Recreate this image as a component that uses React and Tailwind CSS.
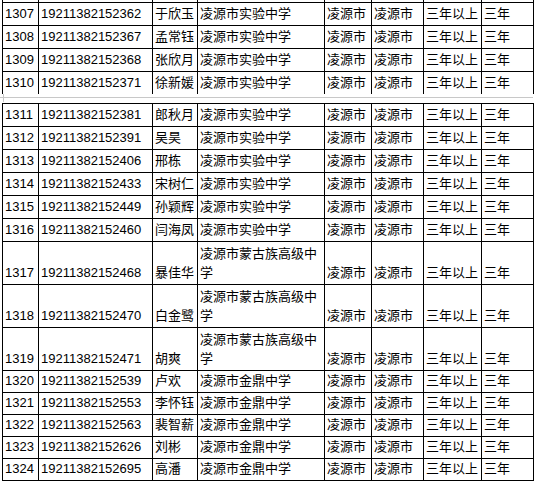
const SY = '凌源市实验中学'
const MG = '凌源市蒙古族高级中学'
const JD = '凌源市金鼎中学'

const first = [
  ['1307', '19211382152362', '于欣玉', SY],
  ['1308', '19211382152367', '孟常钰', SY],
  ['1309', '19211382152368', '张欣月', SY],
  ['1310', '19211382152371', '徐新媛', SY],
]

const second = [
  ['1311', '19211382152381', '郎秋月', SY],
  ['1312', '19211382152391', '吴昊', SY],
  ['1313', '19211382152406', '邢栋', SY],
  ['1314', '19211382152433', '宋树仁', SY],
  ['1315', '19211382152449', '孙颖辉', SY],
  ['1316', '19211382152460', '闫海凤', SY],
  ['1317', '19211382152468', '暴佳华', MG],
  ['1318', '19211382152470', '白金鹭', MG],
  ['1319', '19211382152471', '胡爽', MG],
  ['1320', '19211382152539', '卢欢', JD],
  ['1321', '19211382152553', '李怀钰', JD],
  ['1322', '19211382152563', '裴智薪', JD],
  ['1323', '19211382152626', '刘彬', JD],
  ['1324', '19211382152695', '高潘', JD],
]

const cell = 'border border-black px-[2px] pb-[2px] align-bottom whitespace-normal break-all'

function Cols() {
  return (
    <colgroup>
      <col className="w-[36px]" />
      <col className="w-[114px]" />
      <col className="w-[45px]" />
      <col className="w-[127px]" />
      <col className="w-[47px]" />
      <col className="w-[52px]" />
      <col className="w-[58px]" />
      <col className="w-[52px]" />
    </colgroup>
  )
}

function Row({ r, h }) {
  return (
    <tr className={h}>
      <td className={cell}>{r[0]}</td>
      <td className={cell}>{r[1]}</td>
      <td className={cell}>{r[2]}</td>
      <td className={cell}>{r[3]}</td>
      <td className={cell}>凌源市</td>
      <td className={cell}>凌源市</td>
      <td className={cell}>三年以上</td>
      <td className={cell}>三年</td>
    </tr>
  )
}

// the row above 1307 is scrolled out of view; only its borders peek in
function CutRow() {
  return (
    <tr className="h-[23px]">
      {[0, 1, 2, 3, 4, 5, 6, 7].map(i => (
        <td key={i} className={cell}></td>
      ))}
    </tr>
  )
}

function rowHeight(r) {
  if (r[3] === MG) return 'h-[43px]'
  if (r[3] === JD) return 'h-[22px]'
  return 'h-[23px]'
}

export default function App() {
  const font = { fontFamily: '"Liberation Sans", "Noto Sans CJK SC", sans-serif' }
  return (
    <div className="w-[537px] h-[484px] overflow-hidden bg-white text-black text-[13px] leading-[19px]" style={font}>
      <div className="overflow-hidden h-[94px]">
        <table className="table-fixed border-collapse ml-[2px] w-[531px] -mt-[21px]">
          <Cols />
          <tbody>
            <CutRow />
            {first.map(r => (
              <Row key={r[0]} r={r} h="h-[23px]" />
            ))}
          </tbody>
        </table>
      </div>
      <div className="relative h-[9px]">
        <div className="absolute left-0 right-[4px] top-[3px] h-px bg-[#c8c8c8]" />
        <div className="absolute left-[3px] top-0 h-[8px] w-px bg-[#c8c8c8]" />
      </div>
      <table className="table-fixed border-collapse ml-[2px] w-[531px]">
        <Cols />
        <tbody>
          {second.map(r => (
            <Row key={r[0]} r={r} h={rowHeight(r)} />
          ))}
        </tbody>
      </table>
    </div>
  )
}
